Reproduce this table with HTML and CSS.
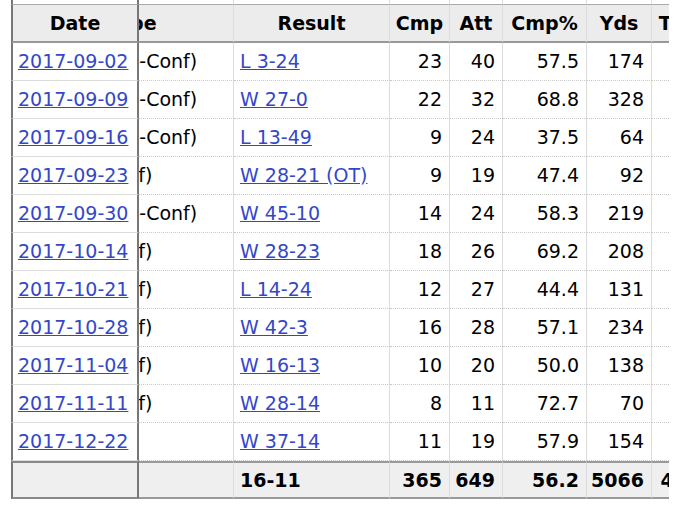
FILE: index.html
```html
<!DOCTYPE html>
<html lang="en">
<head>
<meta charset="utf-8">
<title>Game Log</title>
<link rel="stylesheet" href="styles.css">
</head>
<body>
<div class="gamelog">
  <table class="frozen">
    <colgroup><col class="c-date"></colgroup>
    <thead>
      <tr class="over"><th></th></tr>
      <tr class="head"><th>Date</th></tr>
    </thead>
    <tbody>
      <tr><td><a href="#">2017-09-02</a></td></tr>
      <tr><td><a href="#">2017-09-09</a></td></tr>
      <tr><td><a href="#">2017-09-16</a></td></tr>
      <tr><td><a href="#">2017-09-23</a></td></tr>
      <tr><td><a href="#">2017-09-30</a></td></tr>
      <tr><td><a href="#">2017-10-14</a></td></tr>
      <tr><td><a href="#">2017-10-21</a></td></tr>
      <tr><td><a href="#">2017-10-28</a></td></tr>
      <tr><td><a href="#">2017-11-04</a></td></tr>
      <tr><td><a href="#">2017-11-11</a></td></tr>
      <tr><td><a href="#">2017-12-22</a></td></tr>
    </tbody>
    <tfoot>
      <tr><td class="empty"></td></tr>
    </tfoot>
  </table>
  <div class="scroller">
    <table class="stats">
      <colgroup>
        <col class="c-type"><col class="c-result"><col class="c-cmp"><col class="c-att">
        <col class="c-pct"><col class="c-yds"><col class="c-td"><col class="c-int">
      </colgroup>
      <thead>
        <tr class="over"><th></th><th></th><th></th><th></th><th></th><th></th><th></th><th></th></tr>
        <tr class="head">
          <th class="th-type">Type</th><th>Result</th><th>Cmp</th><th>Att</th>
          <th>Cmp%</th><th>Yds</th><th>TD</th><th>Int</th>
        </tr>
      </thead>
      <tbody>
        <tr><td>(Non-Conf)</td><td><a href="#">L 3-24</a></td><td class="n">23</td><td class="n">40</td><td class="n">57.5</td><td class="n">174</td><td class="n">1</td><td class="n">1</td></tr>
        <tr><td>(Non-Conf)</td><td><a href="#">W 27-0</a></td><td class="n">22</td><td class="n">32</td><td class="n">68.8</td><td class="n">328</td><td class="n">4</td><td class="n">0</td></tr>
        <tr><td>(Non-Conf)</td><td><a href="#">L 13-49</a></td><td class="n">9</td><td class="n">24</td><td class="n">37.5</td><td class="n">64</td><td class="n">0</td><td class="n">2</td></tr>
        <tr><td>(Conf)</td><td><a href="#">W 28-21 (OT)</a></td><td class="n">9</td><td class="n">19</td><td class="n">47.4</td><td class="n">92</td><td class="n">1</td><td class="n">0</td></tr>
        <tr><td>(Non-Conf)</td><td><a href="#">W 45-10</a></td><td class="n">14</td><td class="n">24</td><td class="n">58.3</td><td class="n">219</td><td class="n">4</td><td class="n">0</td></tr>
        <tr><td>(Conf)</td><td><a href="#">W 28-23</a></td><td class="n">18</td><td class="n">26</td><td class="n">69.2</td><td class="n">208</td><td class="n">3</td><td class="n">1</td></tr>
        <tr><td>(Conf)</td><td><a href="#">L 14-24</a></td><td class="n">12</td><td class="n">27</td><td class="n">44.4</td><td class="n">131</td><td class="n">1</td><td class="n">1</td></tr>
        <tr><td>(Conf)</td><td><a href="#">W 42-3</a></td><td class="n">16</td><td class="n">28</td><td class="n">57.1</td><td class="n">234</td><td class="n">3</td><td class="n">0</td></tr>
        <tr><td>(Conf)</td><td><a href="#">W 16-13</a></td><td class="n">10</td><td class="n">20</td><td class="n">50.0</td><td class="n">138</td><td class="n">1</td><td class="n">0</td></tr>
        <tr><td>(Conf)</td><td><a href="#">W 28-14</a></td><td class="n">8</td><td class="n">11</td><td class="n">72.7</td><td class="n">70</td><td class="n">1</td><td class="n">0</td></tr>
        <tr><td></td><td><a href="#">W 37-14</a></td><td class="n">11</td><td class="n">19</td><td class="n">57.9</td><td class="n">154</td><td class="n">2</td><td class="n">1</td></tr>
      </tbody>
      <tfoot>
        <tr><td></td><td>16-11</td><td class="n">365</td><td class="n">649</td><td class="n">56.2</td><td class="n">5066</td><td class="n">41</td><td class="n">6</td></tr>
      </tfoot>
    </table>
  </div>
</div>
</body>
</html>
```

FILE: styles.css
```css
html, body {
  margin: 0;
  padding: 0;
  background: #fff;
}

body {
  font-family: "DejaVu Sans", Verdana, sans-serif;
  font-size: 19px;
  color: #000;
}

a {
  color: #3347c8;
  text-decoration: underline;
}

.gamelog {
  display: flex;
  align-items: flex-start;
  margin-left: 11px;
  width: 658px;
}

table {
  border-collapse: separate;
  border-spacing: 0;
  table-layout: fixed;
}

th, td {
  padding: 0;
  white-space: nowrap;
  overflow: hidden;
}

/* over-header strip */
tr.over th {
  height: 4px;
  line-height: 0;
  font-size: 0;
  background: #fff;
}

tr.head th {
  background: #ececec;
  font-weight: bold;
  text-align: center;
  line-height: 36px;
  border-top: 1px solid #aaa;
  border-bottom: 2px solid #999;
}

tbody td {
  line-height: 37px;
  border-bottom: 1px dotted #c8c8c8;
}

tfoot td {
  background: #efefef;
  font-weight: bold;
  line-height: 34px;
  border-top: 2px solid #999;
  border-bottom: 2px solid #999;
}

td.empty::before {
  content: "";
  display: inline-block;
}

/* frozen date column */
.frozen {
  flex: none;
  width: 128px;
  background: #fff;
}

.c-date { width: 128px; }

.frozen th,
.frozen td {
  border-left: 2px solid #777;
  border-right: 2px solid #777;
}

.frozen td {
  padding-left: 5px;
}

.frozen tbody td {
  border-bottom: 1px solid #dcdcdc;
}

.frozen tfoot td {
  border-bottom-color: #888;
  border-top-color: #888;
}

/* scrolled part */
.scroller {
  flex: 1;
  min-width: 0;
  overflow: hidden;
}

.stats {
  width: 652px;
  margin-left: -51px;
}

.c-type { width: 146px; }
.c-result { width: 156px; }
.c-cmp { width: 60px; }
.c-att { width: 53px; }
.c-pct { width: 84px; }
.c-yds { width: 65px; }
.c-td { width: 43px; }
.c-int { width: 45px; }

.stats th,
.stats td {
  border-right: 1px solid #dcdcdc;
}

.stats td {
  padding-left: 6px;
  text-align: left;
}

.stats td.n {
  padding-left: 0;
  padding-right: 7px;
  text-align: right;
}

.stats th.th-type {
  text-align: left;
  padding-left: 19px;
}
```
